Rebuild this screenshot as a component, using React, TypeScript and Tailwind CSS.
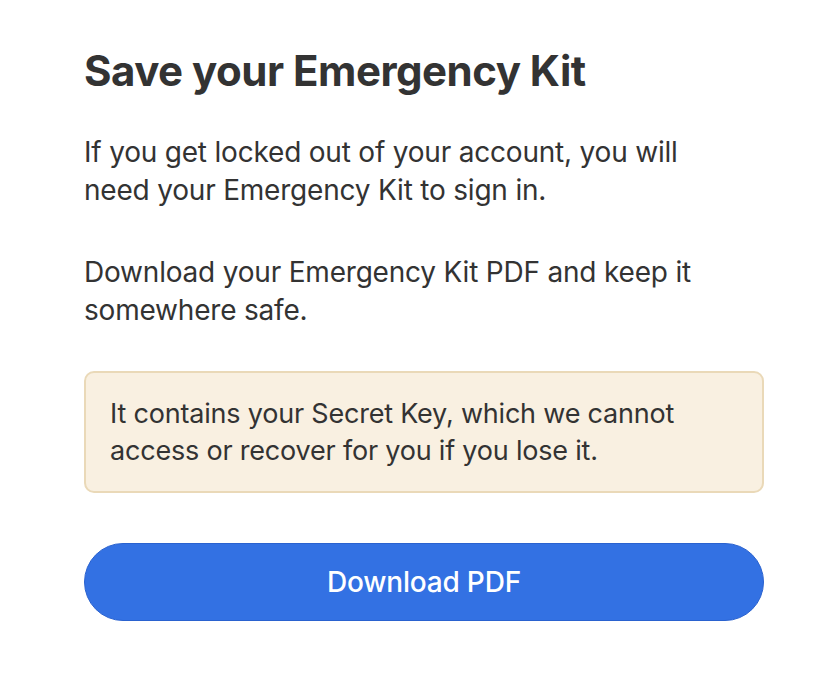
import React from 'react';

export default function App() {
  return (
    <div
      className="min-h-[690px] w-full bg-white text-[#333333]"
      style={{ fontFamily: 'Inter, "Noto Sans", sans-serif' }}
    >
      <div className="ml-[84px] w-[680px] pt-[45px]">
        <h1 className="text-[42px] font-bold leading-[52px] tracking-[-0.5px] text-[#333333]">
          Save your Emergency Kit
        </h1>
        <p className="mt-[36px] max-w-[650px] text-[28px] leading-[38px] tracking-[-0.2px]">
          If you get locked out of your account, you will need your Emergency
          Kit to sign in.
        </p>
        <p className="mt-[44px] max-w-[650px] text-[28px] leading-[38px] tracking-[-0.2px]">
          Download your Emergency Kit PDF and keep it somewhere safe.
        </p>
        <div className="mt-[42px] rounded-[10px] border-2 border-[#ead9b8] bg-[#f9f0e1] px-[24px] py-[22px]">
          <p className="text-[27px] leading-[37px] tracking-[-0.2px]">
            It contains your Secret Key, which we cannot access or recover for
            you if you lose it.
          </p>
        </div>
        <button className="mt-[50px] flex h-[78px] w-full items-center justify-center rounded-full border border-[#2a62cf] bg-[#3371e3] text-[28px] font-medium tracking-[-0.2px] text-white">
          Download PDF
        </button>
      </div>
    </div>
  );
}
